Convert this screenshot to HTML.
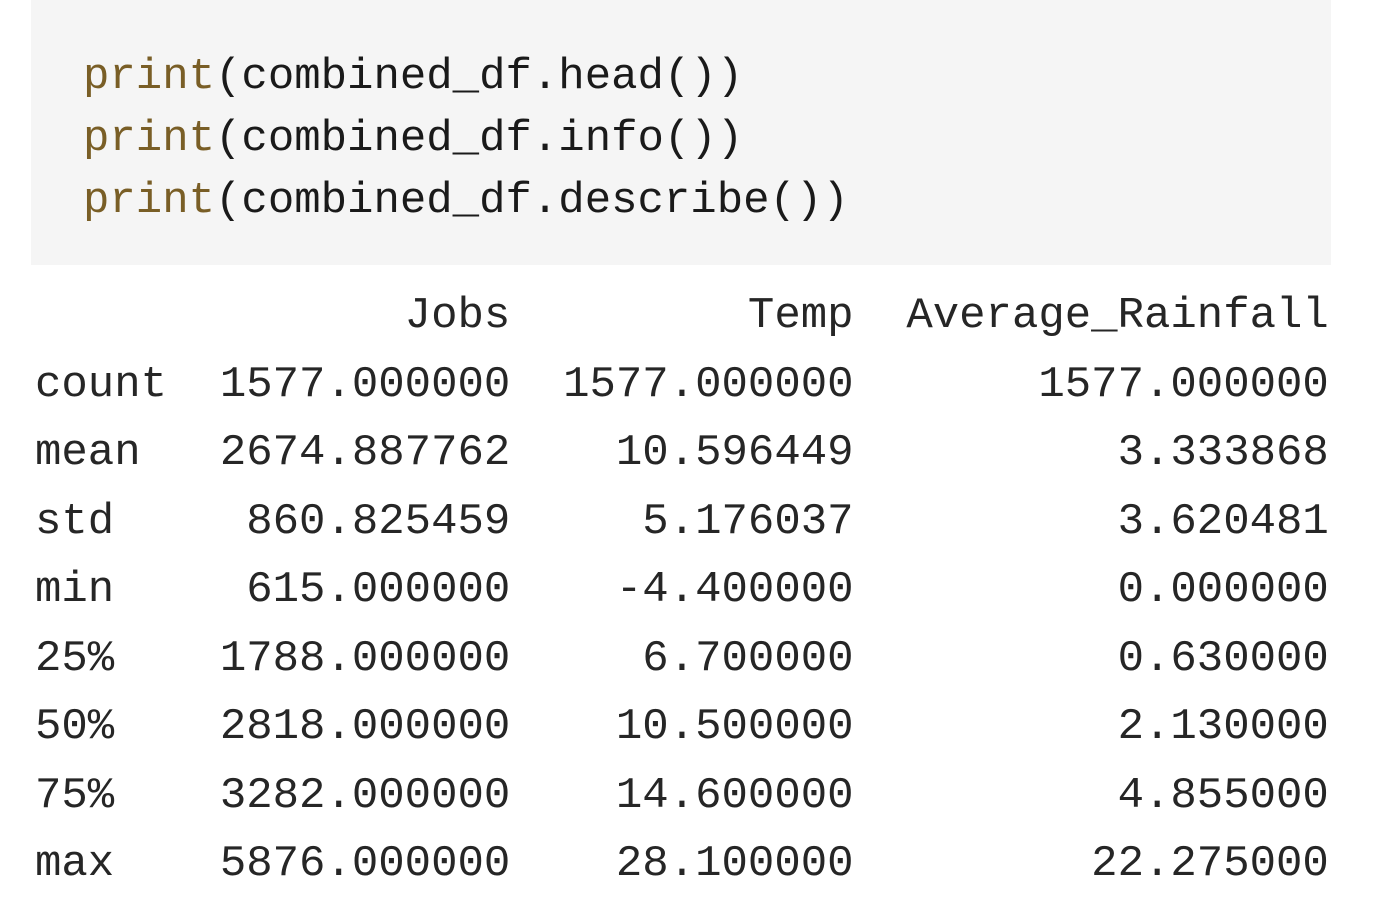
<!DOCTYPE html>
<html><head><style>
html,body{margin:0;padding:0;background:#fff;width:1399px;height:915px;overflow:hidden}
pre{margin:0;font-family:"Liberation Mono",monospace;font-size:44px;letter-spacing:0}
.code{position:absolute;left:31px;top:0;width:1300px;height:265px;background:#f5f5f5}
.code pre{position:absolute;left:52px;top:46px;line-height:62px;color:#1a1a1a}
.k{color:#795e26}
.out{position:absolute;left:35px;top:282px;line-height:68.5px;color:#262626}
</style></head><body>
<div class="code"><pre><span class="k">print</span>(combined_df.head())
<span class="k">print</span>(combined_df.info())
<span class="k">print</span>(combined_df.describe())</pre></div>
<pre class="out">              Jobs         Temp  Average_Rainfall
count  1577.000000  1577.000000       1577.000000
mean   2674.887762    10.596449          3.333868
std     860.825459     5.176037          3.620481
min     615.000000    -4.400000          0.000000
25%    1788.000000     6.700000          0.630000
50%    2818.000000    10.500000          2.130000
75%    3282.000000    14.600000          4.855000
max    5876.000000    28.100000         22.275000</pre>
</body></html>
